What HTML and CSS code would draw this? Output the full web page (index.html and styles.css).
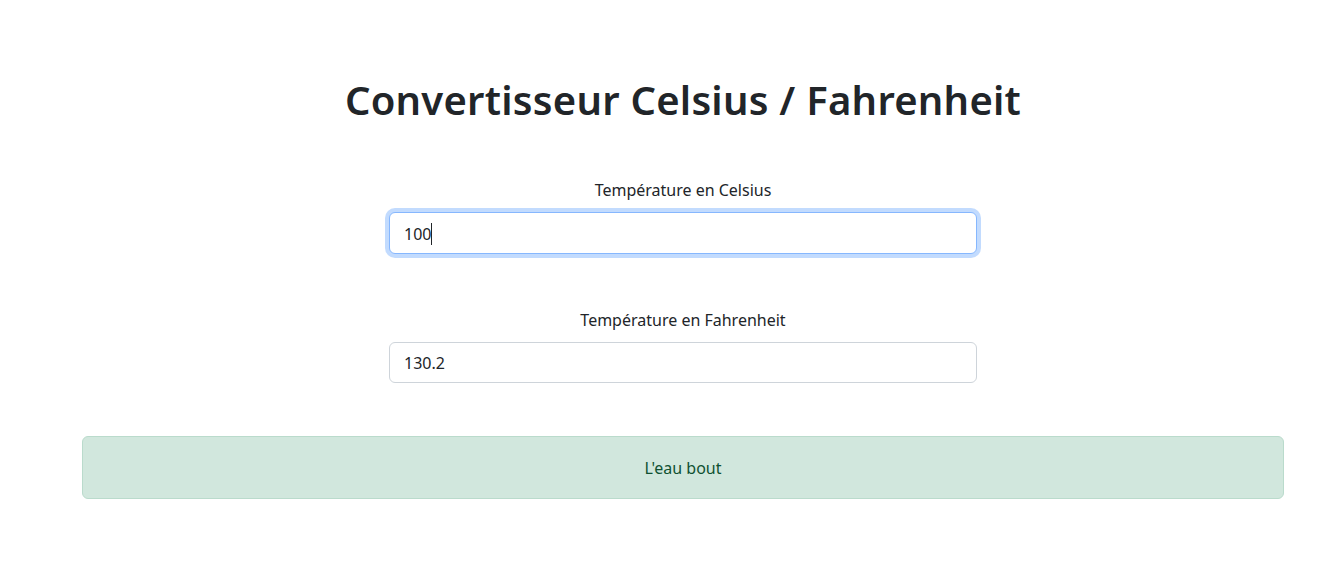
FILE: index.html
```html
<!DOCTYPE html>
<html lang="fr">
<head>
<meta charset="utf-8">
<title>Convertisseur Celsius / Fahrenheit</title>
<link rel="stylesheet" href="styles.css">
</head>
<body>
<main class="page">
  <h1 class="title">Convertisseur Celsius / Fahrenheit</h1>
  <div class="field">
    <label class="field-label" for="celsius">Température en Celsius</label>
    <div class="input-wrap">
      <input id="celsius" class="form-control is-focused" type="text" value="100">
      <span class="caret"></span>
    </div>
  </div>
  <div class="field">
    <label class="field-label" for="fahrenheit">Température en Fahrenheit</label>
    <div class="input-wrap">
      <input id="fahrenheit" class="form-control" type="text" value="130.2">
    </div>
  </div>
  <div class="alert">L'eau bout</div>
</main>
</body>
</html>
```
FILE: styles.css
```css
html, body {
  margin: 0;
  padding: 0;
  background: #ffffff;
}
body {
  font-family: "Noto Sans", "Open Sans", "Liberation Sans", sans-serif;
  font-size: 16px;
  line-height: 24px;
  color: #212529;
}
.page {
  width: 1202px;
  margin-left: 82px;
  padding-top: 76px;
  display: flex;
  flex-direction: column;
  align-items: center;
}
.title {
  margin: 0;
  font-size: 40px;
  line-height: 48px;
  font-weight: 600;
  letter-spacing: 0.25px;
  color: #212529;
  text-align: center;
}
.field {
  width: 588px;
  display: flex;
  flex-direction: column;
  align-items: stretch;
  margin-top: 54px;
}
.field + .field {
  margin-top: 54px;
}
.field-label {
  text-align: center;
  font-size: 16px;
  line-height: 24px;
  margin-bottom: 10px;
}
.input-wrap {
  position: relative;
}
.form-control {
  box-sizing: border-box;
  display: block;
  width: 100%;
  height: 41px;
  padding: 0 14px;
  font-family: inherit;
  font-size: 16px;
  color: #212529;
  background: #fff;
  border: 1px solid #ced4da;
  border-radius: 6px;
  outline: none;
}
.form-control.is-focused {
  height: 42px;
  padding-top: 2px;
  border-color: #86b7fe;
  box-shadow: 0 0 0 4px rgba(13, 110, 253, 0.25);
}
.caret {
  position: absolute;
  left: 42px;
  top: 11px;
  width: 1px;
  height: 22px;
  background: #212529;
}
.alert {
  box-sizing: border-box;
  align-self: stretch;
  margin-top: 53px;
  height: 63px;
  display: flex;
  align-items: center;
  justify-content: center;
  background: #d1e7dd;
  border: 1px solid #badbcc;
  border-radius: 6px;
  color: #0f5132;
}
```
